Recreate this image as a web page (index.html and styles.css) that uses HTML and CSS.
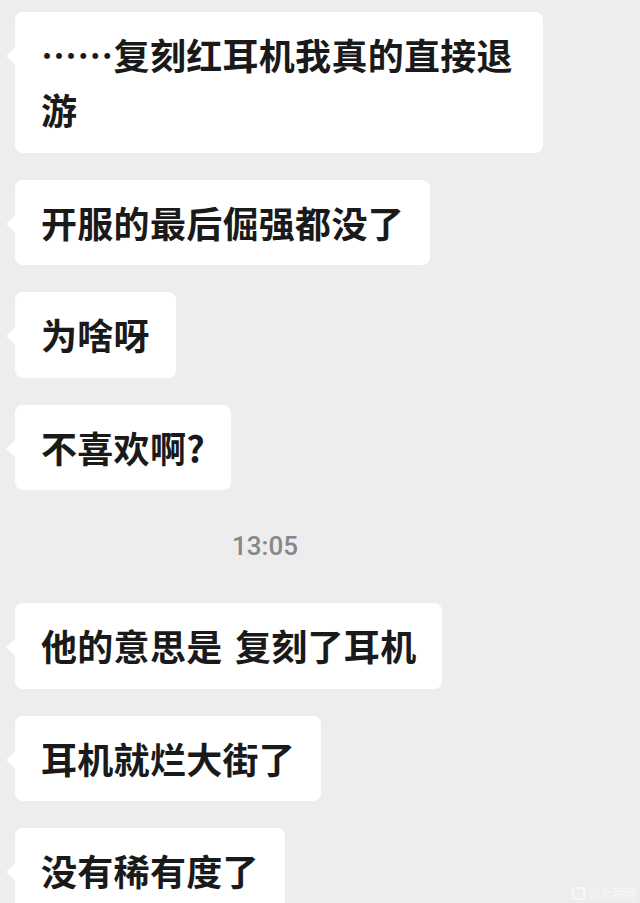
FILE: index.html
```html
<!DOCTYPE html>
<html lang="zh-CN">
<head>
    <meta charset="UTF-8">
    <meta name="viewport" content="width=device-width, initial-scale=1.0">
    <title>聊天记录</title>
    <link rel="stylesheet" href="styles.css">
</head>
<body>
    <div class="chat">
        <div class="bubble bubble-wide">……复刻红耳机我真的直接退游</div>
        <div class="bubble">开服的最后倔强都没了</div>
        <div class="bubble">为啥呀</div>
        <div class="bubble">不喜欢啊?</div>

        <div class="time">13:05</div>

        <div class="bubble">他的意思是 复刻了耳机</div>
        <div class="bubble">耳机就烂大街了</div>
        <div class="bubble">没有稀有度了</div>
    </div>

    <div class="watermark">
        <span class="wm-icon"></span>
        <span class="wm-text">@光明网</span>
    </div>
</body>
</html>
```

FILE: styles.css
```css
html, body {
    height: 100%;
}
body {
    margin: 0;
    background-color: #ededed;
    font-family: "Noto Sans CJK SC", "Noto Sans", sans-serif;
    overflow: hidden;
    position: relative;
}
.chat {
    display: flex;
    flex-direction: column;
    align-items: flex-start;
    gap: 27px;
    padding: 12px 0 0 15px;
}
.bubble {
    position: relative;
    background-color: #fff;
    border-radius: 8px;
    padding: 15px 26px 15.5px;
    font-size: 36px;
    line-height: 55px;
    font-weight: 700;
    letter-spacing: 0.3px;
    word-spacing: 4px;
    color: #1a1a1a;
}
.bubble-wide {
    width: 476px;
}
.bubble::before {
    content: "";
    position: absolute;
    left: -9px;
    top: 35px;
    border-top: 9px solid transparent;
    border-bottom: 9px solid transparent;
    border-right: 10px solid #fff;
}
.time {
    height: 59px;
    line-height: 59px;
    width: 500px;
    text-align: center;
    font-family: Roboto, "Noto Sans", sans-serif;
    font-size: 26px;
    font-weight: 500;
    color: #878787;
}
.watermark {
    position: absolute;
    right: 4px;
    bottom: 3px;
    display: flex;
    align-items: center;
    gap: 4px;
    opacity: 0.6;
}
.wm-icon {
    width: 9px;
    height: 9px;
    border: 2px solid #fff;
    border-radius: 2px;
}
.wm-text {
    font-size: 12px;
    line-height: 14px;
    color: #fff;
}
```
